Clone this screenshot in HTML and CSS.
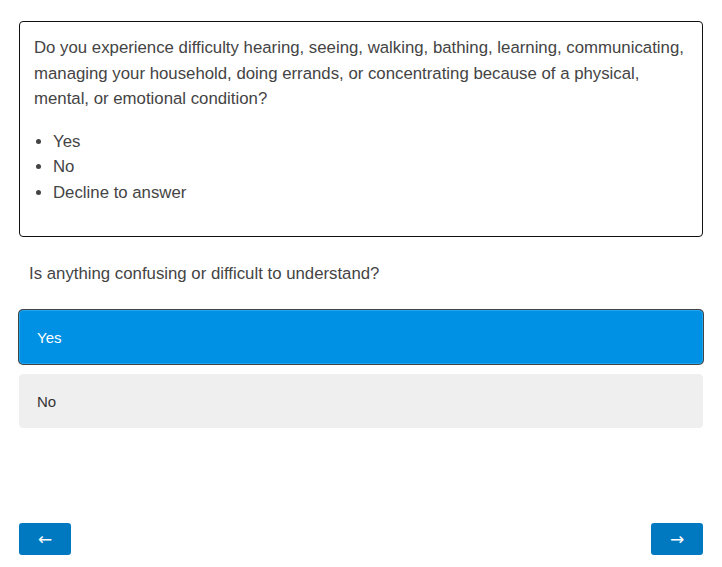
FILE: index.html
```html
<!DOCTYPE html>
<html lang="en">
  <head>
    <meta charset="UTF-8" />
    <title>Survey question</title>
    <link rel="stylesheet" href="styles.css">
  </head>
  <body>
    <!-- Question being reviewed -->
    <div class="card">
      <p>Do you experience difficulty hearing, seeing, walking, bathing, learning, communicating, managing your household, doing errands, or concentrating because of a physical, mental, or emotional condition?</p>
      <ul>
        <li>Yes</li>
        <li>No</li>
        <li>Decline to answer</li>
      </ul>
    </div>

    <p class="prompt">Is anything confusing or difficult to understand?</p>

    <div class="choices">
      <button class="choice selected">Yes</button>
      <button class="choice">No</button>
    </div>

    <!-- Navigation -->
    <div class="nav">
      <button class="nav-btn">&larr;</button>
      <button class="nav-btn">&rarr;</button>
    </div>
  </body>
</html>
```

FILE: styles.css
```css
body {
  font-family: "Liberation Sans", Arial, sans-serif;
  margin: 0;
  padding: 21px 19px 0;
  color: #444;
  background: #fff;
}

.card {
  border: 1px solid #111;
  border-radius: 4px;
  padding: 13px 14px 14px;
  height: 187px;
  font-size: 16.8px;
  line-height: 1.52;
}

.card p {
  margin: 0 0 17px;
}

.card ul {
  margin: 0;
  padding-left: 19px;
}

.prompt {
  margin: 24px 0 0;
  padding-left: 10px;
  font-size: 16.8px;
  line-height: 1.52;
}

.choices {
  display: flex;
  flex-direction: column;
  gap: 10px;
  margin-top: 23px;
}

.choice {
  display: block;
  width: 100%;
  height: 54px;
  border: 1px solid #efefef;
  border-radius: 4px;
  background: #efefef;
  color: #333;
  font-family: inherit;
  font-size: 15px;
  text-align: left;
  padding: 2px 17px 0;
}

.choice.selected {
  background: #0091e4;
  border-color: #1fa6f2;
  color: #fff;
  box-shadow: 0 0 0 1px #444;
}

.nav {
  display: flex;
  justify-content: space-between;
  margin-top: 95px;
}

.nav-btn {
  width: 52px;
  height: 32px;
  border: none;
  border-radius: 3px;
  background: #0079c1;
  color: #fff;
  font-family: "DejaVu Sans", sans-serif;
  font-size: 17px;
  padding: 0;
}
```
